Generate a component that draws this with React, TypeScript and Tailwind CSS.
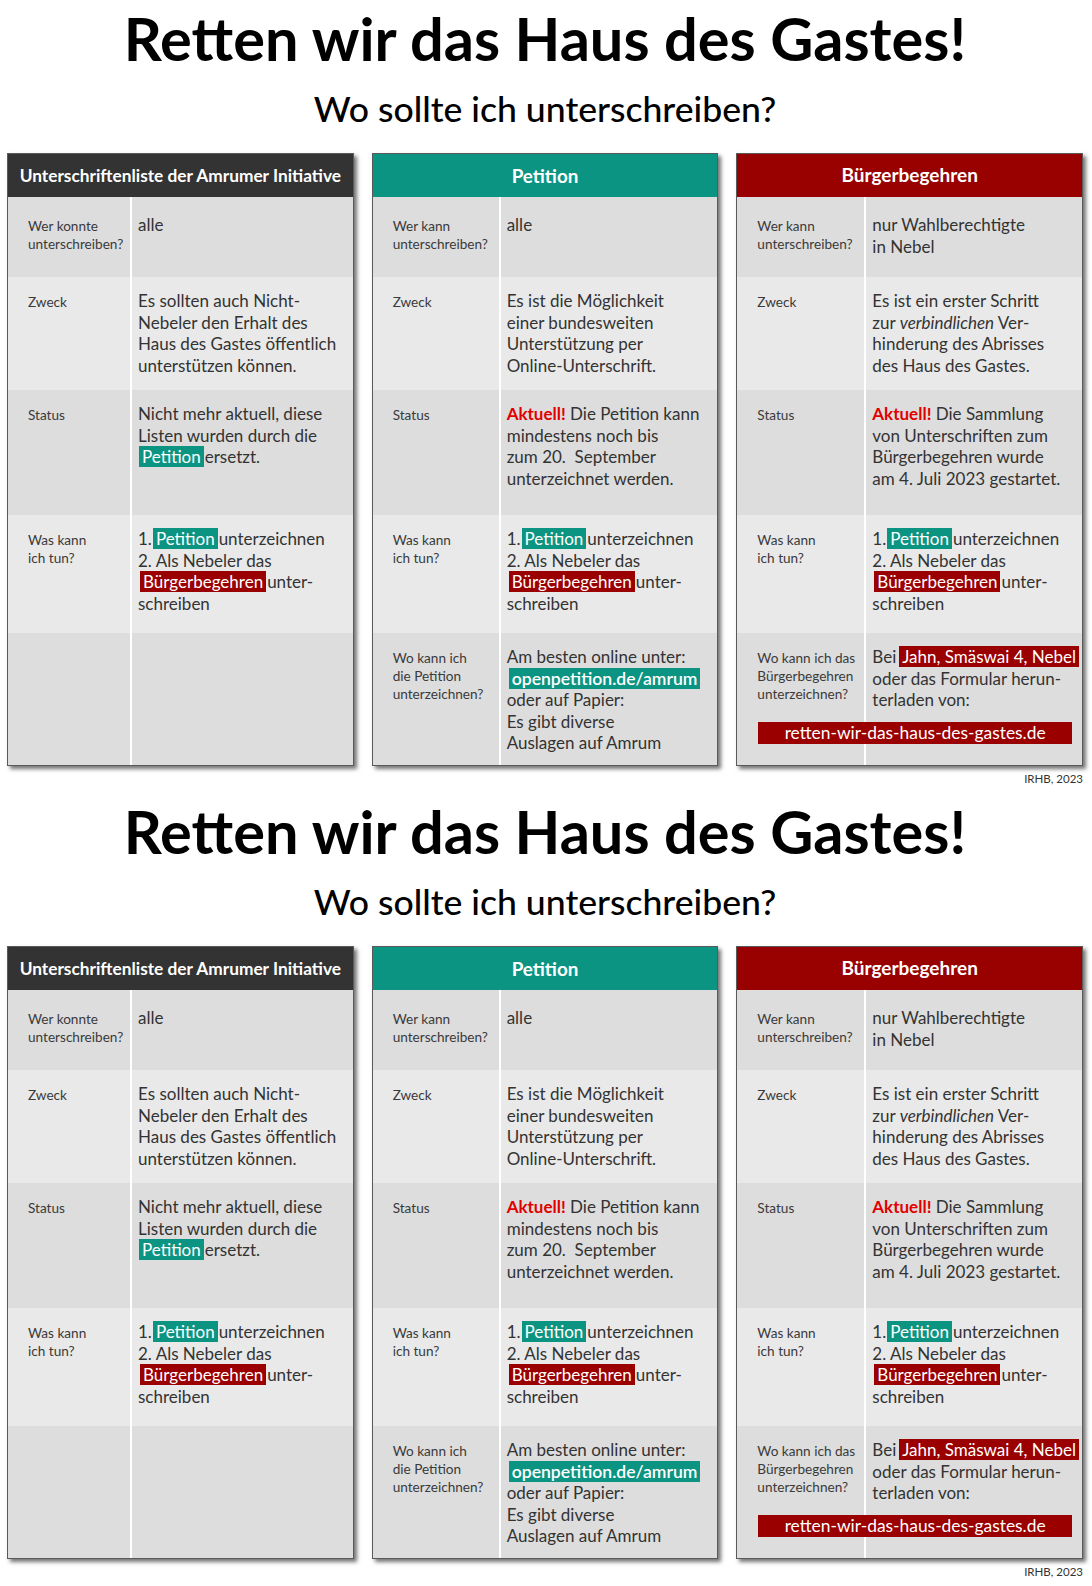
import React from "react";

// row heights / backgrounds shared by all three tables
const rowH = ["h-[80px]", "h-[113px]", "h-[125px]", "h-[118px]", "h-[132px]"];
const rowBg = ["bg-[#dddddd]", "bg-[#e9e9e9]", "bg-[#dddddd]", "bg-[#e9e9e9]", "bg-[#dddddd]"];
const labelPt = ["pt-[20px]", "pt-[16px]", "pt-[16px]", "pt-[16px]", "pt-[16px]"];
const valuePt = ["pt-[17px]", "pt-[13px]", "pt-[13px]", "pt-[13px]", "pt-[13px]"];

const Teal = ({ children, className = "" }: any) => (
  <span className={`bg-[#0c9482] px-[3px] text-white ${className}`}>{children}</span>
);
const Red = ({ children, className = "" }: any) => (
  <span className={`bg-[#9a0000] px-[3px] text-white ${className}`}>{children}</span>
);
const Aktuell = () => <span className="font-bold text-[#e10000]">Aktuell!</span>;

function Row({ i, label, labelW, children }: any) {
  return (
    <div className={`flex ${rowH[i]} ${rowBg[i]}`}>
      <div
        className={`${labelW} ${labelPt[i]} shrink-0 border-r-2 border-white pl-[20px] text-[13.6px] leading-[18px] text-[#3a3a3a] whitespace-nowrap`}
      >
        {label}
      </div>
      <div className={`${valuePt[i]} flex-1 pl-[6px] text-[17px] leading-[21.5px] text-[#333] whitespace-nowrap`}>
        {children}
      </div>
    </div>
  );
}

function Table({ title, head, titleSize, children }: any) {
  return (
    <div className="flex flex-col border border-[#5a5a5a] shadow-[3px_3px_4px_rgba(0,0,0,0.55)]">
      <div className={`flex h-[43px] items-center justify-center ${head} font-bold text-white ${titleSize}`}>
        {title}
      </div>
      {children}
    </div>
  );
}

const wtun = (
  <>
    1.<Teal className="mx-[1px]">Petition</Teal>unterzeichnen
    <br />
    2. Als Nebeler das
    <br />
    <Red className="ml-[2px] mr-[1px]">Bürgerbegehren</Red>unter-
    <br />
    schreiben
  </>
);

function Poster() {
  return (
    <div className="flex h-[793px] flex-col pl-[7px] pr-[9px]">
      <div className="pt-[9px] text-center text-[59.5px] font-bold leading-none text-black">
        Retten wir das Haus des Gastes!
      </div>
      <div className="mt-[22px] text-center text-[35.6px] font-medium leading-none text-black">
        Wo sollte ich unterschreiben?
      </div>

      <div className="mt-[27px] grid grid-cols-3 gap-[18px]">
        <Table title="Unterschriftenliste der Amrumer Initiative" head="bg-[#333333]" titleSize="text-[17.3px]">
          <Row i={0} labelW="w-[124px]" label={<>Wer konnte<br />unterschreiben?</>}>
            alle
          </Row>
          <Row i={1} labelW="w-[124px]" label="Zweck">
            Es sollten auch Nicht-
            <br />
            Nebeler den Erhalt des
            <br />
            Haus des Gastes öffentlich
            <br />
            unterstützen können.
          </Row>
          <Row i={2} labelW="w-[124px]" label="Status">
            Nicht mehr aktuell, diese
            <br />
            Listen wurden durch die
            <br />
            <Teal className="ml-[1px] mr-[1px]">Petition</Teal>ersetzt.
          </Row>
          <Row i={3} labelW="w-[124px]" label={<>Was kann<br />ich tun?</>}>
            {wtun}
          </Row>
          <Row i={4} labelW="w-[124px]" label="">
            {""}
          </Row>
        </Table>

        <Table title="Petition" head="bg-[#0c9482]" titleSize="text-[18.8px]">
          <Row i={0} labelW="w-[128px]" label={<>Wer kann<br />unterschreiben?</>}>
            alle
          </Row>
          <Row i={1} labelW="w-[128px]" label="Zweck">
            Es ist die Möglichkeit
            <br />
            einer bundesweiten
            <br />
            Unterstützung per
            <br />
            Online-Unterschrift.
          </Row>
          <Row i={2} labelW="w-[128px]" label="Status">
            <Aktuell /> Die Petition kann
            <br />
            mindestens noch bis
            <br />
            zum 20.{"\u00a0"} September
            <br />
            unterzeichnet werden.
          </Row>
          <Row i={3} labelW="w-[128px]" label={<>Was kann<br />ich tun?</>}>
            {wtun}
          </Row>
          <Row
            i={4}
            labelW="w-[128px]"
            label={<>Wo kann ich<br />die Petition<br />unterzeichnen?</>}
          >
            Am besten online unter:
            <br />
            <Teal className="ml-[2px] text-[17.6px] font-semibold">openpetition.de/amrum</Teal>
            <br />
            oder auf Papier:
            <br />
            Es gibt diverse
            <br />
            Auslagen auf Amrum
          </Row>
        </Table>

        <Table title="Bürgerbegehren" head="bg-[#990000]" titleSize="text-[19px]">
          <Row i={0} labelW="w-[129px]" label={<>Wer kann<br />unterschreiben?</>}>
            nur Wahlberechtigte
            <br />
            in Nebel
          </Row>
          <Row i={1} labelW="w-[129px]" label="Zweck">
            Es ist ein erster Schritt
            <br />
            zur <i>verbindlichen</i> Ver-
            <br />
            hinderung des Abrisses
            <br />
            des Haus des Gastes.
          </Row>
          <Row i={2} labelW="w-[129px]" label="Status">
            <Aktuell /> Die Sammlung
            <br />
            von Unterschriften zum
            <br />
            Bürgerbegehren wurde
            <br />
            am 4. Juli 2023 gestartet.
          </Row>
          <Row i={3} labelW="w-[129px]" label={<>Was kann<br />ich tun?</>}>
            {wtun}
          </Row>
          <div className="grid h-[132px] grid-cols-[129px_1fr] grid-rows-[auto_1fr] bg-[#dddddd]">
            <div className="col-start-1 row-span-2 row-start-1 border-r-2 border-white pl-[20px] pt-[16px] text-[13.6px] leading-[18px] text-[#3a3a3a] whitespace-nowrap">
              Wo kann ich das
              <br />
              Bürgerbegehren
              <br />
              unterzeichnen?
            </div>
            <div className="col-start-2 row-start-1 pl-[6px] pt-[13px] text-[17px] leading-[21.5px] text-[#333] whitespace-nowrap">
              Bei<Red className="ml-[3px]">Jahn, Smäswai 4, Nebel</Red>
              <br />
              oder das Formular herun-
              <br />
              terladen von:
            </div>
            <div className="relative z-10 col-span-2 col-start-1 row-start-2 mt-[11px] ml-[21px] mr-[10px] h-[22px] self-start bg-[#9a0000] text-center text-[17.4px] leading-[22px] text-white">
              retten-wir-das-haus-des-gastes.de
            </div>
          </div>
        </Table>
      </div>

      <div className="mt-[7px] text-right text-[11.5px] leading-none text-[#333]">IRHB, 2023</div>
    </div>
  );
}

export default function App() {
  return (
    <div className="w-[1092px] bg-white font-['Lato','Open_Sans',sans-serif]">
      <Poster />
      <Poster />
    </div>
  );
}
